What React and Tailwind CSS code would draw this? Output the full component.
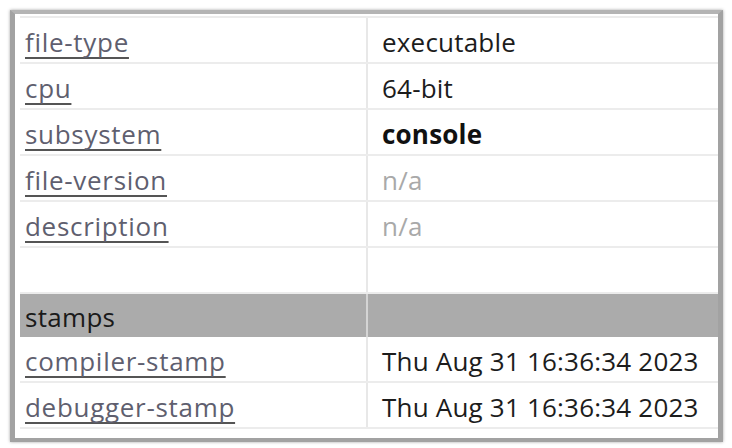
import React from "react";

const rows = [
  { label: "file-type", value: "executable" },
  { label: "cpu", value: "64-bit" },
  { label: "subsystem", value: "console", bold: true },
  { label: "file-version", value: "n/a", muted: true },
  { label: "description", value: "n/a", muted: true },
];

const stamps = [
  { label: "compiler-stamp", value: "Thu Aug 31 16:36:34 2023" },
  { label: "debugger-stamp", value: "Thu Aug 31 16:36:34 2023" },
];

function Row({ label, value, bold, muted }) {
  return (
    <div className="flex h-[46px] border-b-2 border-[#ececec]">
      <div className="w-[348px] flex items-center pl-[5px] pt-[3px] border-r-2 border-[#e8e8e8]">
        {label && (
          <span className="text-[#5f5f6f] tracking-[0.7px] underline decoration-2 underline-offset-[5px] decoration-[#555] [text-decoration-skip-ink:none]">
            {label}
          </span>
        )}
      </div>
      <div
        className={
          "flex-1 flex items-center pl-[14px] pt-[3px] tracking-[0.2px] " +
          (bold ? "font-bold text-[#111] " : "") +
          (muted ? "text-[#a9a9a9]" : "text-[#1c1c1c]")
        }
      >
        {value}
      </div>
    </div>
  );
}

export default function App() {
  return (
    <div
      className="w-[732px] h-[448px] bg-white pt-[10px] pl-[10px] text-[26px] leading-none"
      style={{ fontFamily: '"Open Sans", "Noto Sans", sans-serif' }}
    >
      <div className="relative w-[713px] h-[432px] border-[4px] border-l-[5px] border-r-[5px] border-[#a2a2a2] border-t-[#b4b4b4] pl-[5px] shadow-[0_0_3px_rgba(0,0,0,0.35)] overflow-hidden">
        <div className="h-[4px] border-b-2 border-[#ececec]" />
        {rows.map((r) => (
          <Row key={r.label} {...r} />
        ))}
        <Row label="" value="" />
        <div className="flex h-[43px] bg-[#ababab]">
          <div className="w-[348px] flex items-center pl-[5px] pt-[2px] border-r-2 border-[#d4d4d4] text-[#1a1a1a] tracking-[0.3px]">
            stamps
          </div>
          <div className="flex-1" />
        </div>
        {stamps.map((r) => (
          <Row key={r.label} {...r} />
        ))}
      </div>
    </div>
  );
}
